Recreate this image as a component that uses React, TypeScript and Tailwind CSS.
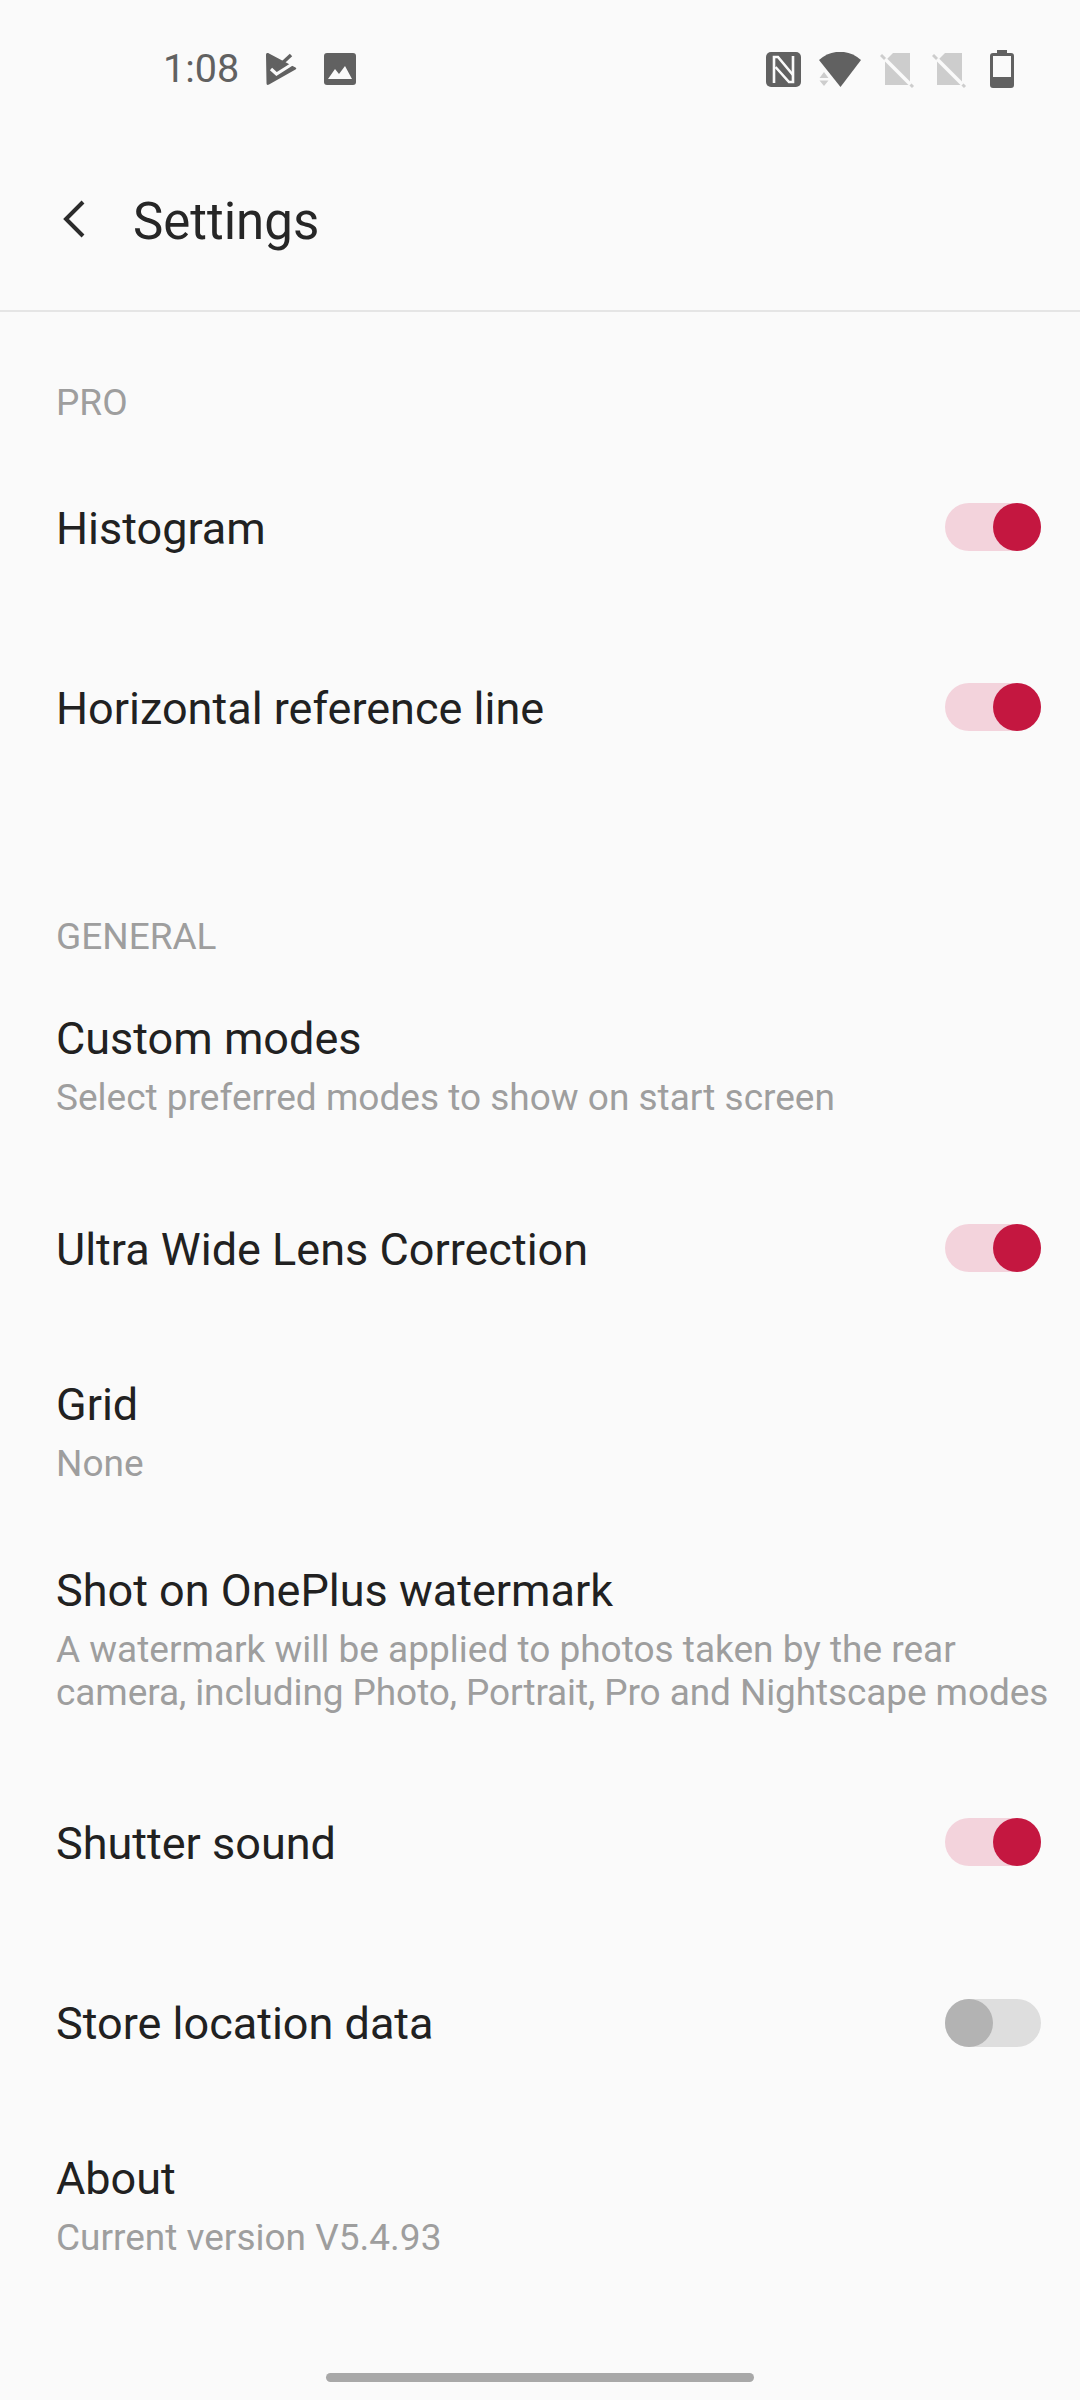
import React from "react";

function Toggle({ on = true }: { on?: boolean }) {
  return (
    <div className={on ? "relative h-[48px] w-[96px] rounded-full bg-[#f3d3dc]" : "relative mt-[2px] h-[48px] w-[96px] rounded-full bg-[#dedede]"}>
      <div className={on ? "absolute right-0 top-0 h-[48px] w-[48px] rounded-full bg-[#c41740]" : "absolute left-0 top-0 h-[48px] w-[48px] rounded-full bg-[#b3b3b3]"} />
    </div>
  );
}

function ToggleRow({ title, on = true }: { title: string; on?: boolean }) {
  return (
    <div className="flex h-[180px] items-center justify-between pl-[56px] pr-[39px]">
      <span className="pt-[4px] text-[45px] leading-[56px] text-[#212121]">{title}</span>
      <Toggle on={on} />
    </div>
  );
}

function DetailRow({ title, sub, className }: { title: string; sub: React.ReactNode; className: string }) {
  return (
    <div className={"flex flex-col justify-center pb-[4px] pl-[56px] " + className}>
      <div className="text-[45px] leading-[56px] text-[#212121]">{title}</div>
      <div className="mt-[9px] text-[37px] leading-[43px] text-[#9e9e9e]">{sub}</div>
    </div>
  );
}

function SimOff() {
  return (
    <svg width="36" height="37" viewBox="0 0 36 37" className="block">
      <path d="M5 9L13 1H30V33H5Z" fill="#cdcdcd" />
      <path d="M1 3L33 35" stroke="#cdcdcd" strokeWidth="3" />
      <path d="M5 7L30.5 32.5" stroke="#fafafa" strokeWidth="3.5" />
    </svg>
  );
}

export default function App() {
  return (
    <div className="flex h-[2400px] w-[1080px] flex-col overflow-hidden bg-[#fafafa] font-['Roboto',sans-serif]">
      <div className="flex h-[135px] items-start pt-[50px]">
        <span className="ml-[163px] text-[39.5px] leading-[38px] text-[#616161]">1:08</span>
        <svg width="32" height="34" viewBox="0 0 32 34" className="ml-[27px] mt-[3px] block">
          <path d="M0 2C0 0 1.5 -0.5 3 0.5L29.5 14.5C30.5 15 30.5 16 29.5 16.5L3 31.5C1.5 32.5 0.5 32 0.5 30Z" fill="#616161" />
          <path d="M12 14L25 2" fill="none" stroke="#616161" strokeWidth="3.5" />
          <path d="M5 16L10.5 21L31 8" fill="none" stroke="#fafafa" strokeWidth="3.2" />
        </svg>
        <svg width="32" height="32" viewBox="0 0 32 32" className="ml-[26px] mt-[3px] block">
          <rect width="32" height="32" rx="3" fill="#616161" />
          <path d="M4 26L11 16L15 21L21 13L28 26Z" fill="#fafafa" />
        </svg>
        <svg width="36" height="36" viewBox="0 0 36 36" className="ml-[410px] mt-[2px] block">
          <rect width="35" height="35" rx="5" fill="#616161" />
          <path d="M8 31V5H12L27 23" fill="none" stroke="#fafafa" strokeWidth="2.6" />
          <path d="M27 4V30H23L9.5 15" fill="none" stroke="#fafafa" strokeWidth="2.6" />
        </svg>
        <svg width="44" height="36" viewBox="0 0 44 36" className="ml-[17px] mt-[2px] block">
          <path d="M0 8C12 -3 30 -3 42 8L21.5 35Z" fill="#616161" />
          <path d="M5 20L9.5 26H0.5ZM0.5 28.5H9.5L5 34Z" fill="#cdcdcd" />
        </svg>
        <div className="ml-[17px] mt-[2px]"><SimOff /></div>
        <div className="ml-[16px] mt-[2px]"><SimOff /></div>
        <svg width="26" height="39" viewBox="0 0 26 39" className="ml-[21px] block">
          <path d="M8 0H18V3H22C24 3 25 4 25 6V35C25 37 24 38 22 38H4C2 38 1 37 1 35V6C1 4 2 3 4 3H8Z" fill="#616161" />
          <rect x="4" y="6" width="18" height="21" fill="#fafafa" />
        </svg>
      </div>

      <div className="flex h-[177px] items-start border-b-2 border-[#e5e5e5] pl-[63px] pt-[62px]">
        <svg width="22" height="38" viewBox="0 0 22 38" className="mt-[3px] block">
          <path d="M20 2L3 19L20 36" fill="none" stroke="#2b2b2b" strokeWidth="4" />
        </svg>
        <span className="ml-[48px] mt-[-3px] text-[51px] leading-[56px] text-[#262626]">Settings</span>
      </div>

      <div className="flex h-[125px] items-start pl-[56px] pt-[71px]">
        <span className="text-[37px] leading-[40px] text-[#9e9e9e]">PRO</span>
      </div>
      <ToggleRow title="Histogram" />
      <ToggleRow title="Horizontal reference line" />

      <div className="flex h-[179px] items-start pl-[56px] pt-[120px]">
        <span className="text-[37px] leading-[40px] text-[#9e9e9e]">GENERAL</span>
      </div>
      <DetailRow title="Custom modes" sub="Select preferred modes to show on start screen" className="h-[182px]" />
      <ToggleRow title="Ultra Wide Lens Correction" />
      <DetailRow title="Grid" sub="None" className="h-[190px]" />
      <DetailRow
        title="Shot on OnePlus watermark"
        sub={<>A watermark will be applied to photos taken by the rear<br /><span className="tracking-[-0.1px]">camera, including Photo, Portrait, Pro and Nightscape modes</span></>}
        className="h-[224px]"
      />
      <ToggleRow title="Shutter sound" />
      <ToggleRow title="Store location data" on={false} />
      <DetailRow title="About" sub="Current version V5.4.93" className="h-[190px]" />

      <div className="ml-[326px] mt-[71px] h-[9px] w-[428px] rounded-full bg-[#a8a8a8]" />
    </div>
  );
}
